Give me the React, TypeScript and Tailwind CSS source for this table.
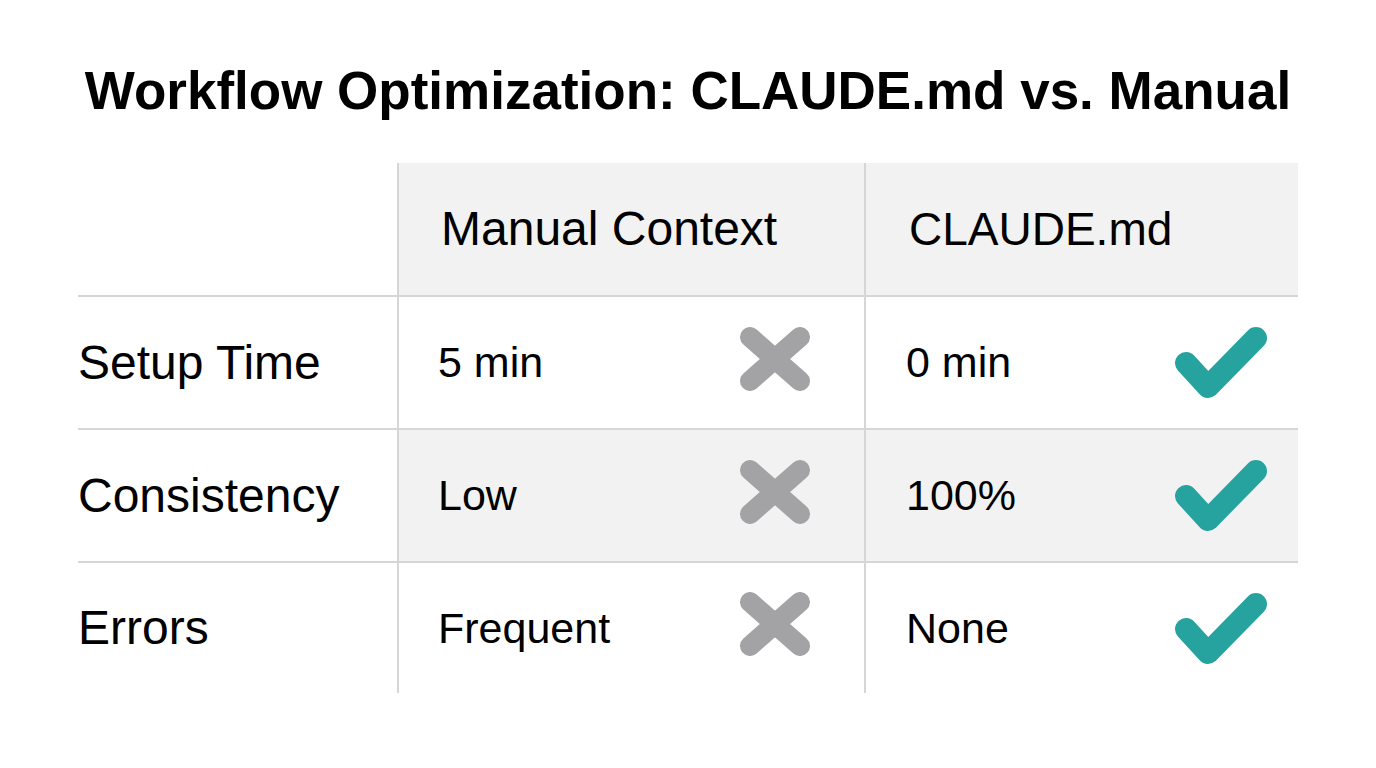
const rows = [
  { label: 'Setup Time', manual: '5 min', claude: '0 min', shaded: false },
  { label: 'Consistency', manual: 'Low', claude: '100%', shaded: true },
  { label: 'Errors', manual: 'Frequent', claude: 'None', shaded: false },
];

function CrossIcon() {
  return (
    <svg width="70" height="64" viewBox="0 0 70 64" className="mb-[8px] shrink-0">
      <path d="M10 10 L60 54 M60 10 L10 54" stroke="#a3a3a5" strokeWidth="20" strokeLinecap="round" fill="none" />
    </svg>
  );
}

function CheckIcon() {
  return (
    <svg width="94" height="73" viewBox="0 0 94 73" className="shrink-0">
      <path d="M12 37 L34 61 L82 12" stroke="#27a39f" strokeWidth="22" strokeLinecap="round" strokeLinejoin="round" fill="none" />
    </svg>
  );
}

export default function App() {
  return (
    <div className="w-[1376px] h-[768px] bg-white text-black flex flex-col" style={{ fontFamily: '"Liberation Sans", Arial, sans-serif' }}>
      <h1 className="pt-[64px] text-center text-[53px] leading-none font-bold">
        Workflow Optimization: CLAUDE.md vs. Manual
      </h1>

      <div className="ml-[78px] mt-[46px] w-[1220px] grid grid-cols-[319px_467px_434px]">
        {/* header */}
        <div className="h-[132px]" />
        <div className="h-[132px] bg-[#f2f2f2] border-l-2 border-[#d6d6d6] flex items-center pl-[42px] text-[48px]">
          Manual Context
        </div>
        <div className="h-[132px] bg-[#f2f2f2] border-l-2 border-[#d6d6d6] flex items-center pl-[43px] text-[46px]">
          CLAUDE.md
        </div>

        {rows.map((r, i) => {
          const h = i === rows.length - 1 ? 'h-[132px]' : 'h-[133px]';
          const bg = r.shaded ? 'bg-[#f2f2f2]' : 'bg-white';
          return (
            <div key={r.label} className="contents">
              <div className={`${h} border-t-2 border-[#d6d6d6] flex items-center text-[48px]`}>
                {r.label}
              </div>
              <div className={`${h} ${bg} border-t-2 border-l-2 border-[#d6d6d6] flex items-center justify-between pl-[39px] pr-[54px] text-[43px]`}>
                <span>{r.manual}</span>
                <CrossIcon />
              </div>
              <div className={`${h} ${bg} border-t-2 border-l-2 border-[#d6d6d6] flex items-center justify-between pl-[40px] pr-[30px] text-[43px]`}>
                <span>{r.claude}</span>
                <CheckIcon />
              </div>
            </div>
          );
        })}
      </div>
    </div>
  );
}
